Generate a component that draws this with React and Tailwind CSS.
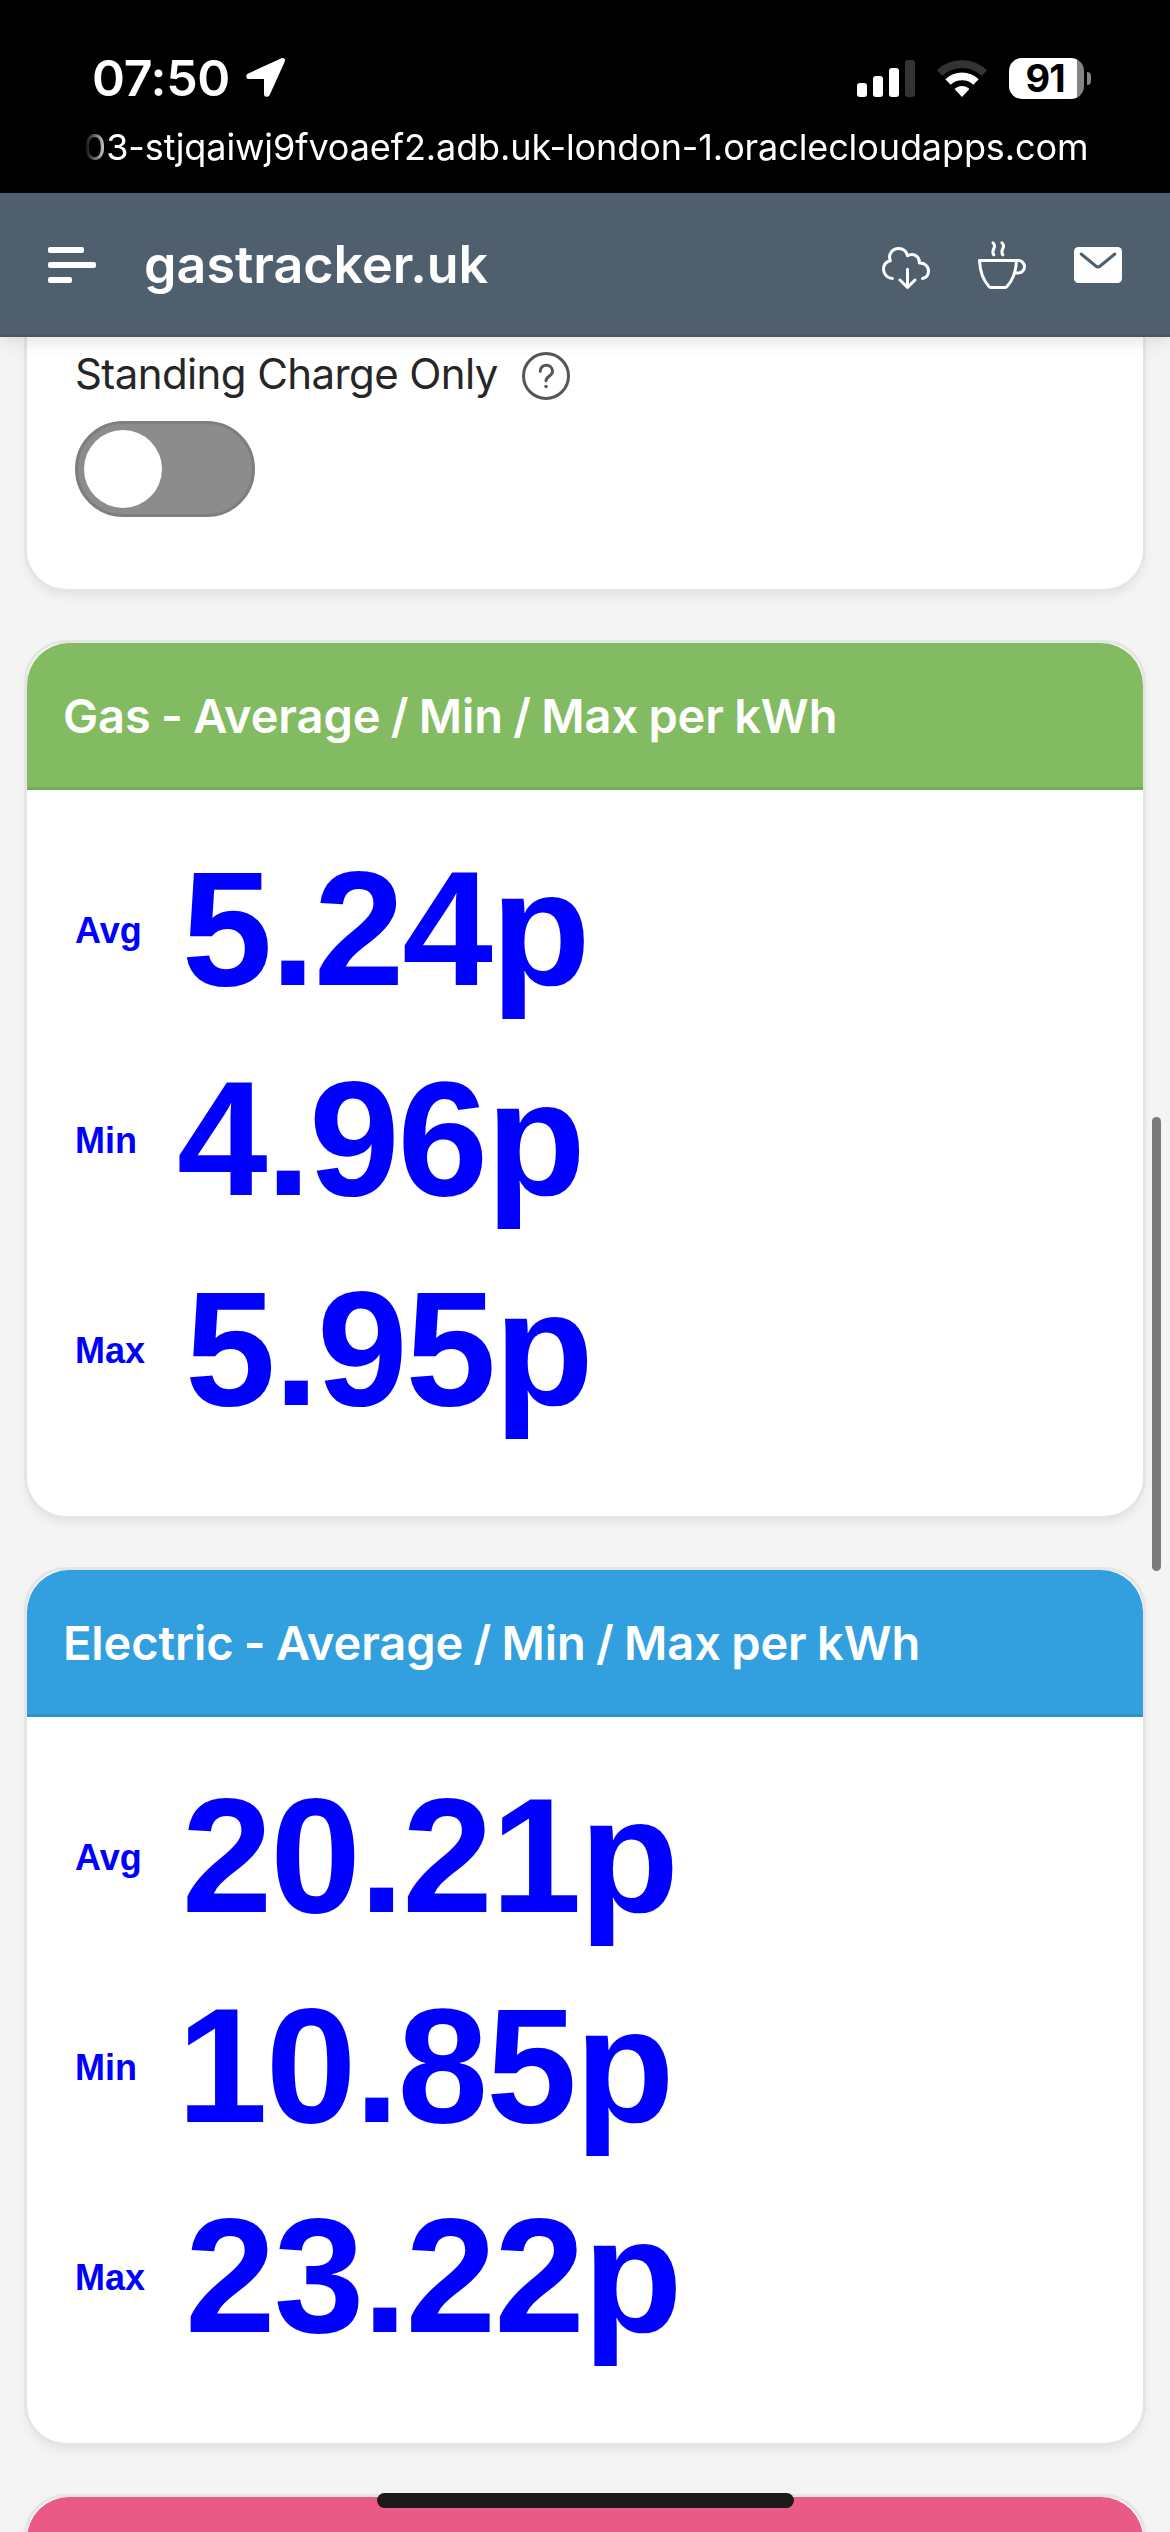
const RATES = [
  {
    title: 'Gas - Average / Min / Max per kWh',
    header: 'bg-[#82bb61] border-[#78ac59]',
    rows: [
      { label: 'Avg', value: '5.24p' },
      { label: 'Min', value: '4.96p' },
      { label: 'Max', value: '5.95p' },
    ],
  },
  {
    title: 'Electric - Average / Min / Max per kWh',
    header: 'bg-[#329fde] border-[#2e92cc]',
    rows: [
      { label: 'Avg', value: '20.21p' },
      { label: 'Min', value: '10.85p' },
      { label: 'Max', value: '23.22p' },
    ],
  },
];

const CARD = 'border-[3px] border-[#e5e5e5] bg-white shadow-[0_6px_12px_-3px_rgba(0,0,0,0.08)]';

const LocationIcon = () => (
  <svg width="40" height="40" viewBox="0 0 40 40" fill="#fff" stroke="#fff" strokeWidth="5" strokeLinejoin="round">
    <path d="M36.5 2.5 L2.8 18 L2.8 18.5 L20.5 18.5 L20.5 36.2 L21.3 36.2 Z" />
  </svg>
);

const SignalIcon = () => (
  <svg width="58" height="37" viewBox="0 0 58 37" fill="#fff">
    <rect x="0" y="23" width="10" height="14" rx="3" />
    <rect x="16" y="16" width="10" height="21" rx="3" />
    <rect x="32" y="8" width="10" height="29" rx="3" />
    <rect x="48" y="0" width="10" height="37" rx="3" fill="#333" />
  </svg>
);

const WifiIcon = () => (
  <svg width="50" height="37" viewBox="0 0 50 37" fill="none" strokeWidth="7.8">
    <path d="M2.5 12.9 A33 33 0 0 1 47.5 12.9" stroke="#333" />
    <path d="M11 22 A20.5 20.5 0 0 1 39 22" stroke="#fff" />
    <path d="M25 37 L18 29.6 Q17.4 28.8 18.3 28.2 A11.8 11.8 0 0 1 31.7 28.2 Q32.6 28.8 32 29.6 Z" fill="#fff" />
  </svg>
);

const Battery = () => (
  <div className="flex items-center gap-[3px]">
    <div className="flex h-[41px] w-[75px] items-center justify-center rounded-[13px] bg-[linear-gradient(to_right,#fff_68px,#858585_68px)] pr-[3px] text-[38px] leading-10 font-bold tracking-[-1px] text-black">
      91
    </div>
    <div className="h-[13px] w-1 rounded-r-full bg-[#858585]" />
  </div>
);

const MenuIcon = () => (
  <div className="flex w-12 flex-col gap-[9px]">
    <span className="h-1.5 w-9 rounded-[2px] bg-white" />
    <span className="h-1.5 w-12 rounded-[2px] bg-white" />
    <span className="h-1.5 w-6 rounded-[2px] bg-white" />
  </div>
);

const CloudDownloadIcon = () => (
  <svg width="48" height="48" viewBox="0 0 48 48" fill="none" stroke="#fff" strokeWidth="3" strokeLinecap="round" strokeLinejoin="round">
    <path d="M10.5 37.5 A9.2 9.2 0 0 1 1.5 28.5 C1.5 24 4.2 20.8 8.3 19.8 C5.8 13 10.5 7.5 16.7 7.5 C21.2 7.5 24.6 10.4 25.5 14.8 C31.5 11.4 38 15.5 37.3 22 C42.5 21.7 46.5 25.2 46.5 30 C46.5 33.8 44.2 36.6 40.5 37.5" />
    <path d="M25.5 28.3 V46.3 M18 39 L25.5 46.5 L33 39" />
  </svg>
);

const CupIcon = () => (
  <svg width="48" height="48" viewBox="0 0 48 48" fill="none" stroke="#fff" strokeWidth="3" strokeLinecap="round" strokeLinejoin="round">
    <path d="M1.5 19.5 H38.5 C38 31 34.5 39.5 29 45.4 Q28 46.5 26.5 46.5 H13.5 Q12 46.5 11 45.4 C5.5 39.5 2 31 1.5 19.5 Z" />
    <path d="M38.5 19.5 H40.3 A6.2 6.2 0 0 1 40.3 31.9 H37" />
    <path d="M15 1.8 C20 6 12 9 15.8 13.8 M24 1.8 C29 6 21 9 24.8 13.8" />
  </svg>
);

const MailIcon = () => (
  <svg width="48" height="48" viewBox="0 0 48 48" fill="none">
    <rect y="6" width="48" height="36" rx="4.5" fill="#fff" />
    <path d="M7.2 13 L21.8 25 Q24 26.8 26.2 25 L40.8 13" stroke="#505f6e" strokeWidth="3" strokeLinecap="round" />
  </svg>
);

const HelpIcon = () => (
  <svg width="48" height="48" viewBox="0 0 48 48" fill="none" stroke="#565656" strokeWidth="3" strokeLinecap="round">
    <circle cx="24" cy="24" r="22.5" />
    <path d="M18.3 19.2 C18.3 10.8 30.5 11.4 30.5 19.3 C30.5 24.6 24 24 24 28.8" />
    <circle cx="24" cy="34.5" r="1.7" fill="#565656" stroke="none" />
  </svg>
);

const StatusBar = () => (
  <div className="h-[193px] shrink-0 bg-black text-white">
    <div className="flex h-[117px] items-end justify-between pr-[79px] pb-[19px] pl-[92px]">
      <div className="flex items-center gap-4">
        <span className="text-[50px] leading-10 font-semibold tracking-[-0.3px]">07:50</span>
        <LocationIcon />
      </div>
      <div className="flex h-10 items-center gap-[22px]">
        <SignalIcon />
        <WifiIcon />
        <Battery />
      </div>
    </div>
    <div className="flex justify-center pl-0.5">
      <p className="text-[36px] leading-[60px] tracking-[-0.1px] whitespace-nowrap [mask-image:linear-gradient(to_right,transparent,black_26px)]">
        03-stjqaiwj9fvoaef2.adb.uk-london-1.oraclecloudapps.com
      </p>
    </div>
  </div>
);

const AppHeader = () => (
  <header className="z-10 flex h-36 shrink-0 items-center border-b-[3px] border-[#485563] bg-[#505f6e] px-12 pt-[3px] text-white shadow-[0_3px_18px_rgba(0,0,0,0.12)]">
    <MenuIcon />
    <h1 className="ml-12 flex-1 text-[52px] font-semibold">gastracker.uk</h1>
    <div className="flex gap-12">
      <CloudDownloadIcon />
      <CupIcon />
      <MailIcon />
    </div>
  </header>
);

const RateCard = ({ title, header, rows }) => (
  <section className={`h-[879px] shrink-0 rounded-[42px] ${CARD}`}>
    <div className={`flex h-[147px] items-center rounded-t-[42px] border-b-[3px] pt-0.5 pl-9 ${header}`}>
      <h2 className="text-[47px] font-semibold tracking-[-0.1px] text-white [font-feature-settings:'calt'_0] [word-spacing:-1.4px]">
        {title}
      </h2>
    </div>
    <div className="pt-[33px] pl-12 font-['Liberation_Sans',sans-serif] font-bold text-[#0000ff]">
      {rows.map((row) => (
        <div key={row.label} className="flex h-[210px] items-center gap-10">
          <span className="pt-1.5 text-[36px] leading-none">{row.label}</span>
          <span className="text-[163px] leading-none tracking-[-2px]">{row.value}</span>
        </div>
      ))}
    </div>
  </section>
);

const App = () => (
  <div className="relative flex h-[2532px] w-[1170px] flex-col overflow-hidden bg-[#f4f4f4] font-['Inter',sans-serif]">
    <StatusBar />
    <AppHeader />

    <main className="flex flex-1 flex-col gap-12 overflow-hidden px-6">
      <section className={`h-[255px] shrink-0 rounded-b-[42px] border-t-0 pt-[15px] pl-12 ${CARD}`}>
        <div className="flex h-12 items-center gap-6">
          <span className="pb-1.5 text-[42px] tracking-[-0.6px] text-[#262626]">Standing Charge Only</span>
          <HelpIcon />
        </div>
        <div className="mt-[21px] flex h-24 w-[180px] items-center rounded-full border-[3px] border-[#7e7e7e] bg-[#8c8c8c] pl-1.5">
          <div className="size-[78px] rounded-full bg-white" />
        </div>
      </section>

      {RATES.map((card) => (
        <RateCard key={card.title} {...card} />
      ))}

      <section className={`h-[879px] shrink-0 rounded-[42px] ${CARD}`}>
        <div className="h-[147px] rounded-t-[42px] bg-[#e95b86]" />
      </section>
    </main>

    {/* Scroll thumb and home indicator sit over the page */}
    <div className="absolute top-[1117px] right-[9px] z-20 h-[454px] w-[9px] rounded-full bg-[#7b7b7b]" />
    <div className="absolute bottom-6 left-[377px] z-20 h-[15px] w-[417px] rounded-full bg-[#1b1b1b]" />
  </div>
);

export default App;
